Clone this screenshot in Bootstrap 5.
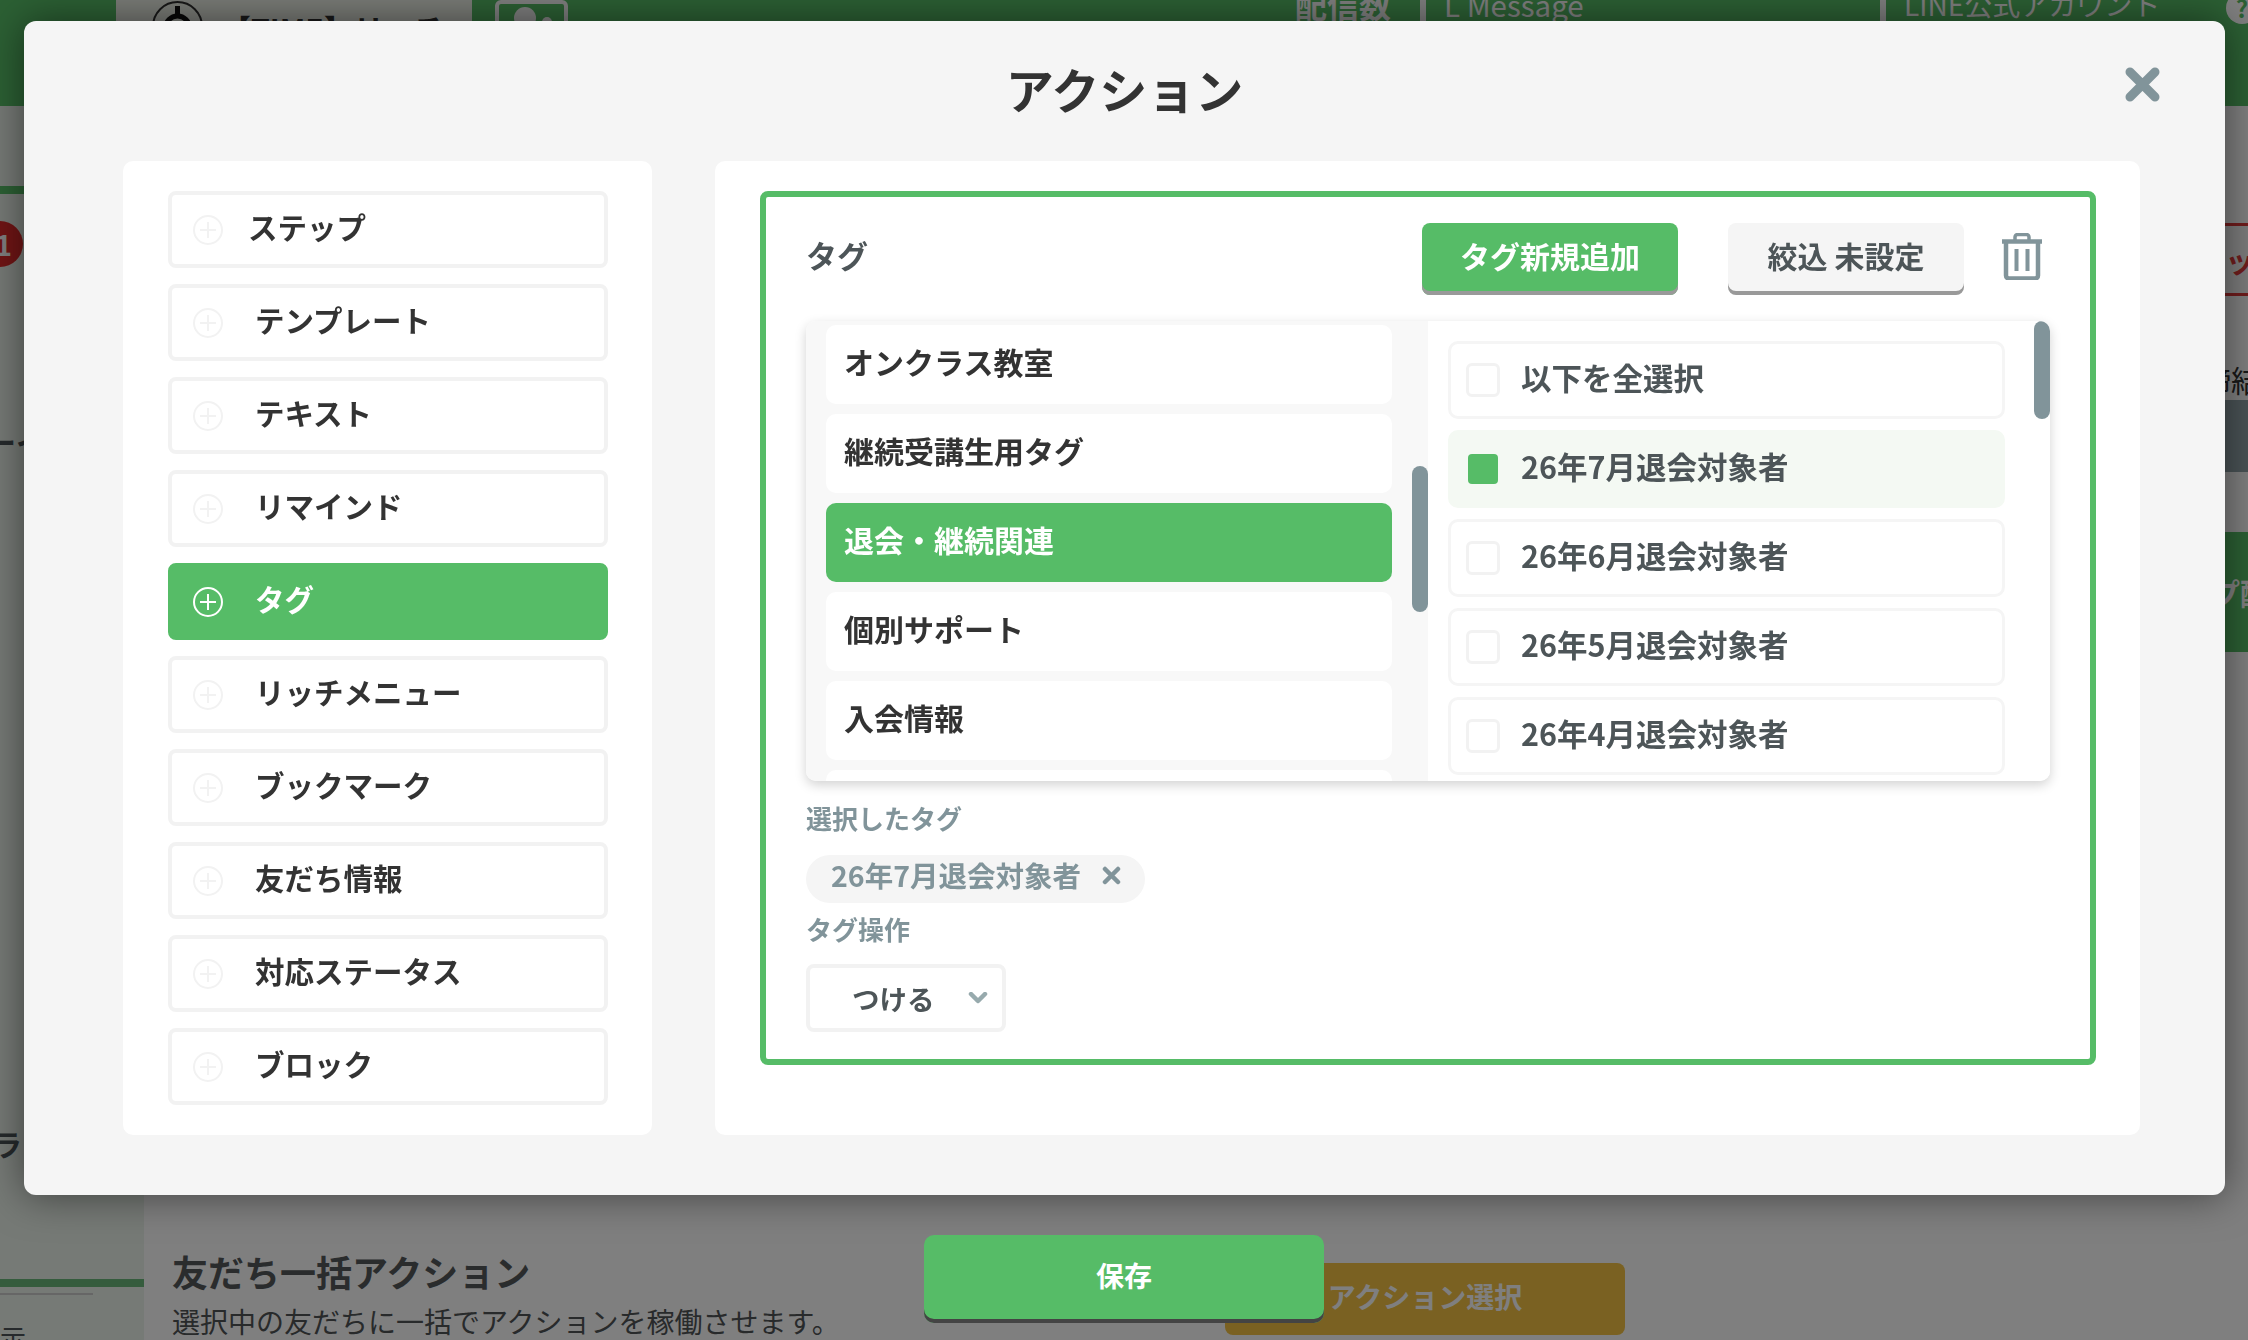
<!DOCTYPE html>
<html lang="ja">
  <head>
    <meta charset="UTF-8" />
    <meta name="viewport" content="width=device-width, initial-scale=1.0" />
    <title>アクション</title>
    <link href="https://cdn.jsdelivr.net/npm/bootstrap@5.3.0/dist/css/bootstrap.min.css" rel="stylesheet" />
    <style>
      html, body { height: 100%; }
      body {
        overflow: hidden;
        background: #fff;
        font-family: "Noto Sans CJK JP", "Noto Sans", sans-serif;
        color: #333;
      }
      /* page behind the modal */
      .page-layer { height: 1340px; width: 2248px; overflow: hidden; }
      .top-strip { height: 106px; background: #58c168; color: #fff; overflow: hidden; flex: none; }
      .top-tab { margin-left: 116px; width: 356px; height: 60px; background: #f5f9ef; padding-left: 36px; color: #333; flex: none; overflow: hidden; }
      .top-tab svg { margin-top: 1px; flex: none; }
      .top-tab span { font-size: 30px; font-weight: 700; line-height: 44px; margin: 6px 0 0 18px; white-space: nowrap; }
      .user-box { width: 73px; height: 60px; margin-left: 23px; border: 4px solid #fff; border-radius: 6px; flex: none; }
      .top-count { margin-left: 727px; width: 125px; font-size: 32px; font-weight: 700; line-height: 32px; margin-top: -12px; white-space: nowrap; flex: none; }
      .top-link { font-size: 28px; line-height: 32px; margin-top: -12px; padding-left: 18px; white-space: nowrap; flex: none; }
      .top-link-en { width: 454px; font-size: 29.5px; }
      .top-link-line { width: 340px; }
      .top-rule { width: 6px; height: 60px; background: #fff; flex: none; }
      .help-mark { width: 32px; height: 32px; margin: -8px 0 0 0; border-radius: 50%; background: #fff; color: #58c168; font-weight: 700; font-size: 24px; line-height: 32px; text-align: center; flex: none; }
      .side-col { width: 144px; background: #ecf4ec; flex: none; overflow: hidden; }
      .side-strip { height: 8px; background: #58c168; margin-top: 80px; }
      .side-badge { width: 46px; height: 46px; margin: 27px 0 0 -23px; border-radius: 50%; background: #e02a2a; color: #fff; font-size: 28px; font-weight: 700; line-height: 46px; text-align: right; padding-right: 11px; }
      .side-dash { font-size: 30px; line-height: 40px; margin: 154px 0 0 -14px; white-space: nowrap; font-weight: 700; color: #4d5558; }
      .side-ra { font-size: 30px; line-height: 40px; margin-top: 662px; margin-left: -8px; font-weight: 700; color: #4d5558; }
      .side-bar { height: 8px; background: #6ab87a; margin-top: 116px; }
      .side-line { height: 2px; width: 93px; background: #ccc; margin-top: 6px; }
      .side-note { font-size: 26px; line-height: 40px; margin: 22px 0 0 -26px; color: #4d5558; white-space: nowrap; }
      .main-col { min-width: 0; }
      .right-stack { width: 23px; margin-left: auto; overflow: hidden; }
      .red-tab { height: 73px; margin-top: 117px; border-top: 3px solid #e03a3a; border-bottom: 3px solid #e03a3a; color: #e03a3a; font-weight: 700; font-size: 30px; line-height: 67px; white-space: nowrap; background: #f8f8f8; }
      .note-line { margin-top: 62px; font-size: 30px; line-height: 42px; color: #333; margin-left: -24px; white-space: nowrap; height: 42px; }
      .dark-bar { height: 72px; background: #94a6ad; }
      .green-bar { height: 120px; margin-top: 60px; background: #58c168; color: #fff; font-size: 30px; font-weight: 700; line-height: 120px; white-space: nowrap; text-indent: -15px; }
      .bulk-row { margin-top: auto; margin-bottom: -8px; padding-left: 28px; }
      .bulk-text { width: 1053px; flex: none; }
      .bulk-title { font-size: 36px; font-weight: 700; line-height: 44px; color: #55595b; margin: 0 0 1px; }
      .bulk-sub { font-size: 28px; line-height: 54px; color: #505456; white-space: nowrap; margin: 0; }
      .gold-btn { width: 400px; height: 72px; margin-top: 14px; padding-bottom: 6px; border-radius: 8px; background: #f4c244; color: #fff; font-size: 28px; font-weight: 700; }

      .dim-layer { position: fixed; inset: 0; background: rgba(0, 0, 0, 0.5); }

      /* modal */
      .act-modal {
        position: absolute; left: 24px; top: 21px; width: 2201px; height: 1174px;
        background: #f5f5f5; border-radius: 12px; box-shadow: 0 0 40px rgba(0, 0, 0, 0.5);
      }
      .act-head { height: 140px; }
      .act-title { font-size: 48px; font-weight: 700; color: #333; margin: 0 0 5px; line-height: 1.2; }
      .close-btn { position: absolute; left: 2101px; top: 46px; background: none; border: 0; padding: 0; line-height: 0; }
      .act-body { padding: 0 85px 0 99px; gap: 63px; }
      .type-panel { width: 529px; height: 974px; background: #fff; border-radius: 10px; padding: 30px 44px 30px 45px; gap: 16px; flex: none; }
      .type-item { height: 77px; border: 4px solid #f2f2f2; border-radius: 8px; background: #fff; padding-left: 21px; color: #333; font-size: 29.5px; font-weight: 700; gap: 32px; }
      .type-item span { margin-bottom: 6px; }
      .type-item.is-on { background: #56bc67; border-color: #56bc67; color: #fff; }
      .type-item span.first-label { margin-left: -7px; }
      .edit-panel { width: 1425px; height: 974px; background: #fff; border-radius: 10px; padding: 30px 44px 0 45px; flex: none; }
      .tag-box { height: 874px; border: 6px solid #56bc67; border-radius: 8px; padding: 26px 40px; }
      .tag-head { height: 72px; }
      .tag-head h2 { font-size: 31px; font-weight: 700; color: #4d5558; margin: 0 auto 9px 0; }
      .raised-btn { height: 72px; border: 0; border-radius: 8px; font-size: 30px; font-weight: 700; padding: 0 0 7px; }
      .raised-new { width: 256px; background: #56bc67; color: #fff; box-shadow: inset 0 -4px 0 #999; }
      .raised-filter { width: 236px; margin-left: 50px; background: #f5f5f5; color: #4d5558; box-shadow: inset 0 -4px 0 #999; }
      .trash-btn { margin: 0 8px 0 38px; background: none; border: 0; padding: 0 0 5px; line-height: 0; }
      .picker { height: 460px; margin-top: 26px; border-radius: 10px; box-shadow: 0 4px 12px rgba(0, 0, 0, 0.18); position: relative; overflow: hidden; }
      .folder-col { width: 622px; background: #f8f8f8; padding: 4px 36px 0 20px; gap: 10px; overflow: hidden; flex: none; }
      .folder-row { height: 79px; flex: none; background: #fff; border-radius: 10px; padding: 0 0 6px 18px; font-size: 30px; font-weight: 700; color: #333; }
      .folder-row.is-on { background: #56bc67; color: #fff; }
      .tag-col { background: #fff; padding: 20px 45px 0 20px; gap: 11px; overflow: hidden; }
      .tag-row { height: 78px; flex: none; border: 3px solid #f5f5f5; border-radius: 10px; padding-left: 15px; gap: 21px; font-size: 30.5px; font-weight: 700; color: #4d5558; }
      .tag-row span:last-child { margin-bottom: 4px; }
      .tag-row.is-on { background: #f4f9f3; border-color: #f4f9f3; }
      .tick { width: 34px; height: 34px; border: 3px solid #f2f2f2; border-radius: 6px; background: #fff; flex: none; }
      .tag-row.is-on .tick { width: 30px; height: 30px; margin: 0 2px; border: 0; border-radius: 4px; background: #56bc67; }
      .thumb { position: absolute; width: 16px; border-radius: 8px; background: #81949a; }
      .thumb-left { left: 606px; top: 145px; height: 146px; }
      .thumb-right { left: 1228px; top: 0; height: 98px; }
      .field-label { font-size: 26px; font-weight: 700; color: #81949a; line-height: 36px; margin: 0; }
      .label-picked { margin-top: 19px; }
      .label-op { margin-top: 8px; }
      .tag-chip { height: 48px; width: 339px; margin-top: 19px; border-radius: 24px; background: #f5f5f5; color: #81949a; padding: 0 0 0 25px; font-size: 28.5px; font-weight: 700; gap: 21px; white-space: nowrap; }
      .tag-chip span { margin-bottom: 8px; }
      .tag-chip svg { margin-bottom: 8px; }
      .act-select { width: 200px; height: 68px; margin-top: 17px; border: 4px solid #f2f2f2; border-radius: 8px; padding-left: 42px; color: #4d5558; font-size: 27.5px; font-weight: 700; gap: 33px; }
      .act-select span { margin-top: 2px; }
      .save-btn {
        position: absolute; left: 924px; top: 1235px; width: 400px; height: 88px;
        border: 0; border-radius: 10px; background: #56bc67; color: #fff;
        font-size: 28px; font-weight: 700; box-shadow: inset 0 -4px 0 #444; padding: 0 0 8px;
      }
    </style>
  </head>
  <body>
    <div class="page-layer d-flex flex-column">
      <div class="top-strip d-flex align-items-start">
        <div class="top-tab d-flex align-items-start">
          <svg width="51" height="51" viewBox="0 0 51 51">
            <circle cx="25.5" cy="25.5" r="24.5" fill="none" stroke="#333" stroke-width="2" />
            <circle cx="25.5" cy="27" r="12" fill="none" stroke="#111" stroke-width="5" />
            <rect x="23" y="5" width="5" height="12" fill="#111" />
          </svg>
          <span>【TIME】リッチ</span>
        </div>
        <div class="user-box">
          <svg width="65" height="52" viewBox="0 0 65 52">
            <circle cx="26" cy="14" r="11" fill="#fff" />
            <circle cx="48" cy="18" r="5" fill="#fff" />
          </svg>
        </div>
        <div class="top-count">配信数</div>
        <div class="top-rule"></div>
        <div class="top-link top-link-en">L Message</div>
        <div class="top-rule"></div>
        <div class="top-link top-link-line">LINE公式アカウント</div>
        <div class="help-mark">?</div>
      </div>
      <div class="d-flex flex-grow-1" style="min-height: 0">
        <div class="side-col">
          <div class="side-strip"></div>
          <div class="side-badge">1</div>
          <div class="side-dash">ーイ</div>
          <div class="side-ra">ラ</div>
          <div class="side-bar"></div>
          <div class="side-line"></div>
          <div class="side-note">表示</div>
        </div>
        <div class="main-col flex-grow-1 d-flex flex-column">
          <div class="right-stack">
            <div class="red-tab">ッ</div>
            <div class="note-line">締結</div>
            <div class="dark-bar"></div>
            <div class="green-bar">プ配信</div>
          </div>
          <div class="bulk-row d-flex align-items-start">
            <div class="bulk-text">
              <h3 class="bulk-title">友だち一括アクション</h3>
              <p class="bulk-sub">選択中の友だちに一括でアクションを稼働させます。</p>
            </div>
            <div class="gold-btn d-flex align-items-center justify-content-center">アクション選択</div>
          </div>
        </div>
      </div>
    </div>

    <div class="dim-layer"></div>

    <div class="act-modal">
      <div class="act-head d-flex align-items-center justify-content-center">
        <h1 class="act-title">アクション</h1>
        <button class="close-btn" type="button" aria-label="閉じる">
          <svg width="35" height="35" viewBox="0 0 35 35">
            <path d="M5 5 30 30M30 5 5 30" stroke="#81949a" stroke-width="9" stroke-linecap="round" fill="none" />
          </svg>
        </button>
      </div>
      <div class="act-body d-flex">
        <div class="type-panel d-flex flex-column" id="typeList"></div>
        <div class="edit-panel">
          <div class="tag-box">
            <div class="tag-head d-flex align-items-center">
              <h2>タグ</h2>
              <button class="raised-btn raised-new" type="button">タグ新規追加</button>
              <button class="raised-btn raised-filter" type="button">絞込 未設定</button>
              <button class="trash-btn" type="button" aria-label="削除">
                <svg width="40" height="47" viewBox="0 0 40 47" fill="none" stroke="#81949a">
                  <path d="M13 7V4a2.5 2.5 0 0 1 2.5-2.5h9A2.5 2.5 0 0 1 27 4v3" stroke-width="3.5" />
                  <path d="M0 8.5h40" stroke-width="4.5" />
                  <path d="M4 10v32.5a3 3 0 0 0 3 3h26a3 3 0 0 0 3-3V10" stroke-width="4.5" />
                  <path d="M14.5 16v22M25.5 16v22" stroke-width="4" />
                </svg>
              </button>
            </div>
            <div class="picker d-flex">
              <div class="folder-col d-flex flex-column" id="folderList"></div>
              <div class="tag-col flex-grow-1 d-flex flex-column" id="tagList"></div>
              <div class="thumb thumb-left"></div>
              <div class="thumb thumb-right"></div>
            </div>
            <p class="field-label label-picked">選択したタグ</p>
            <div class="tag-chip d-flex align-items-center">
              <span>26年7月退会対象者</span>
              <svg width="19" height="19" viewBox="0 0 19 19">
                <path d="M3 3 16 16M16 3 3 16" stroke="#81949a" stroke-width="4.5" stroke-linecap="round" fill="none" />
              </svg>
            </div>
            <p class="field-label label-op">タグ操作</p>
            <div class="act-select d-flex align-items-center">
              <span>つける</span>
              <svg width="20" height="12" viewBox="0 0 20 12">
                <path d="M3 2 10 9 17 2" stroke="#97aaad" stroke-width="4.5" stroke-linecap="round" stroke-linejoin="round" fill="none" />
              </svg>
            </div>
          </div>
        </div>
      </div>
    </div>
    <button class="save-btn" type="button">保存</button>

    <script src="https://cdn.jsdelivr.net/npm/bootstrap@5.3.0/dist/js/bootstrap.bundle.min.js"></script>
    <script>
      const types = ["ステップ", "テンプレート", "テキスト", "リマインド", "タグ", "リッチメニュー", "ブックマーク", "友だち情報", "対応ステータス", "ブロック"];
      const plusIcon = (c) =>
        '<svg width="30" height="30" viewBox="0 0 30 30" class="flex-shrink-0" fill="none" stroke="' + c + '" stroke-width="2"><circle cx="15" cy="15" r="14" /><path d="M15 7v16M7 15h16" /></svg>';
      document.getElementById("typeList").innerHTML = types
        .map((t, i) => {
          const on = t === "タグ";
          return '<div class="type-item d-flex align-items-center' + (on ? " is-on" : "") + '">' + plusIcon(on ? "#fff" : "#f2f2f2") + "<span" + (i === 0 ? ' class="first-label"' : "") + ">" + t + "</span></div>";
        })
        .join("");

      const folders = ["オンクラス教室", "継続受講生用タグ", "退会・継続関連", "個別サポート", "入会情報", "その他"];
      document.getElementById("folderList").innerHTML = folders
        .map((f, i) => '<div class="folder-row d-flex align-items-center' + (i === 2 ? " is-on" : "") + '">' + f + "</div>")
        .join("");

      const tags = ["以下を全選択", "26年7月退会対象者", "26年6月退会対象者", "26年5月退会対象者", "26年4月退会対象者", "26年3月退会対象者"];
      document.getElementById("tagList").innerHTML = tags
        .map((t, i) => '<div class="tag-row d-flex align-items-center' + (i === 1 ? " is-on" : "") + '"><span class="tick"></span><span>' + t + "</span></div>")
        .join("");
    </script>
  </body>
</html>
